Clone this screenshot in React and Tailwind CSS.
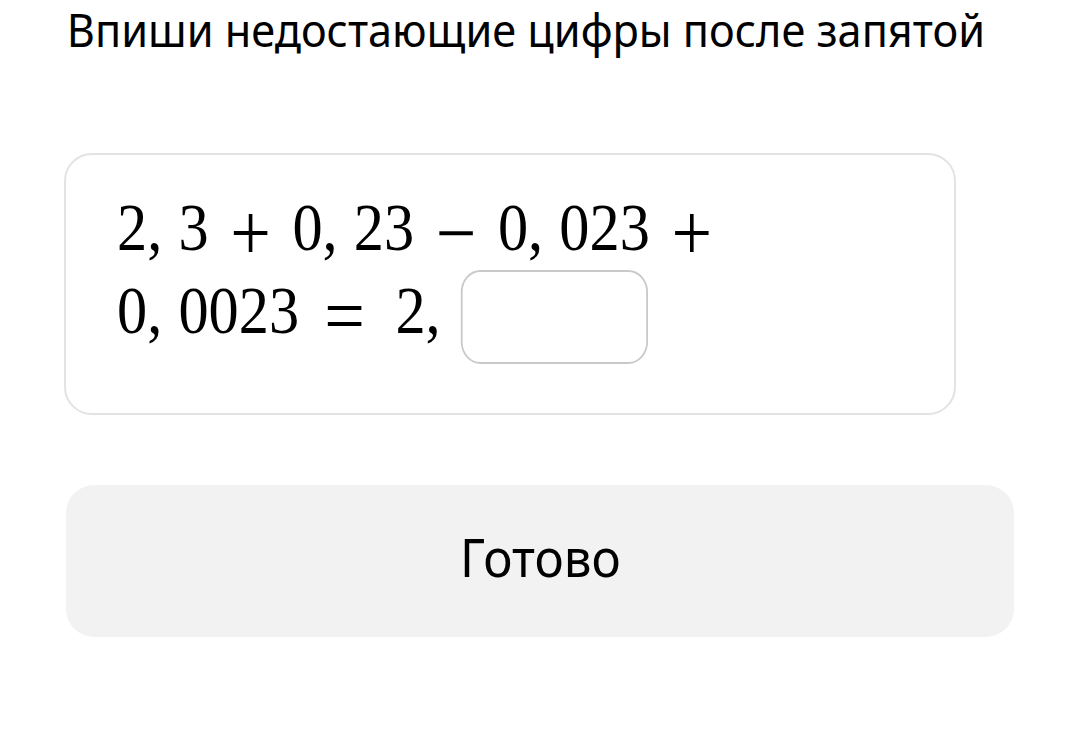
import React from 'react';

// Math expression split into lines, like a KaTeX render
const Num = ({ children }) => <span>{children}</span>;
const Op = ({ children, className = 'mx-[24px]' }) => (
  <span className={`inline-block translate-y-[10px] text-[80px] leading-[0] ${className}`}>{children}</span>
);
const Comma = () => <span className="mr-[18px]">,</span>;

function App() {
  return (
    <div className="w-[1079px] h-[743px] bg-white pl-[64px] pt-[1px] font-['Noto_Sans',sans-serif] text-black">
      <h1 className="text-[46px] leading-[56px] pl-[3px] origin-left scale-x-[0.94] whitespace-nowrap">
        Впиши недостающие цифры после запятой
      </h1>

      <div className="mt-[96px] w-[892px] h-[262px] border-2 border-[#e3e3e3] rounded-[28px] pl-[51px] pt-[31px] font-['Liberation_Serif',serif] text-[67px] leading-[83px]">
        <div className="whitespace-nowrap origin-left scale-x-[0.9]">
          <Num>2</Num><Comma /><Num>3</Num><Op>+</Op><Num>0</Num><Comma /><Num>23</Num>
          <Op>−</Op><Num>0</Num><Comma /><Num>023</Num><Op>+</Op>
        </div>
        <div className="whitespace-nowrap origin-left scale-x-[0.9]">
          <Num>0</Num><Comma /><Num>0023</Num><Op className="ml-[28px] mr-[34px]">=</Op><Num>2</Num><span>,</span>
          <span className="inline-block align-baseline ml-[22px] mb-[-31px] w-[208px] h-[94px] border-2 border-[#c9c9c9] rounded-[22px]" />
        </div>
      </div>

      <button className="mt-[70px] ml-[2px] w-[948px] h-[152px] bg-[#f2f2f2] rounded-[28px] text-[53px] flex items-center justify-center pb-[8px]">
        <span className="scale-x-[0.93]">Готово</span>
      </button>
    </div>
  );
}

export default App;
